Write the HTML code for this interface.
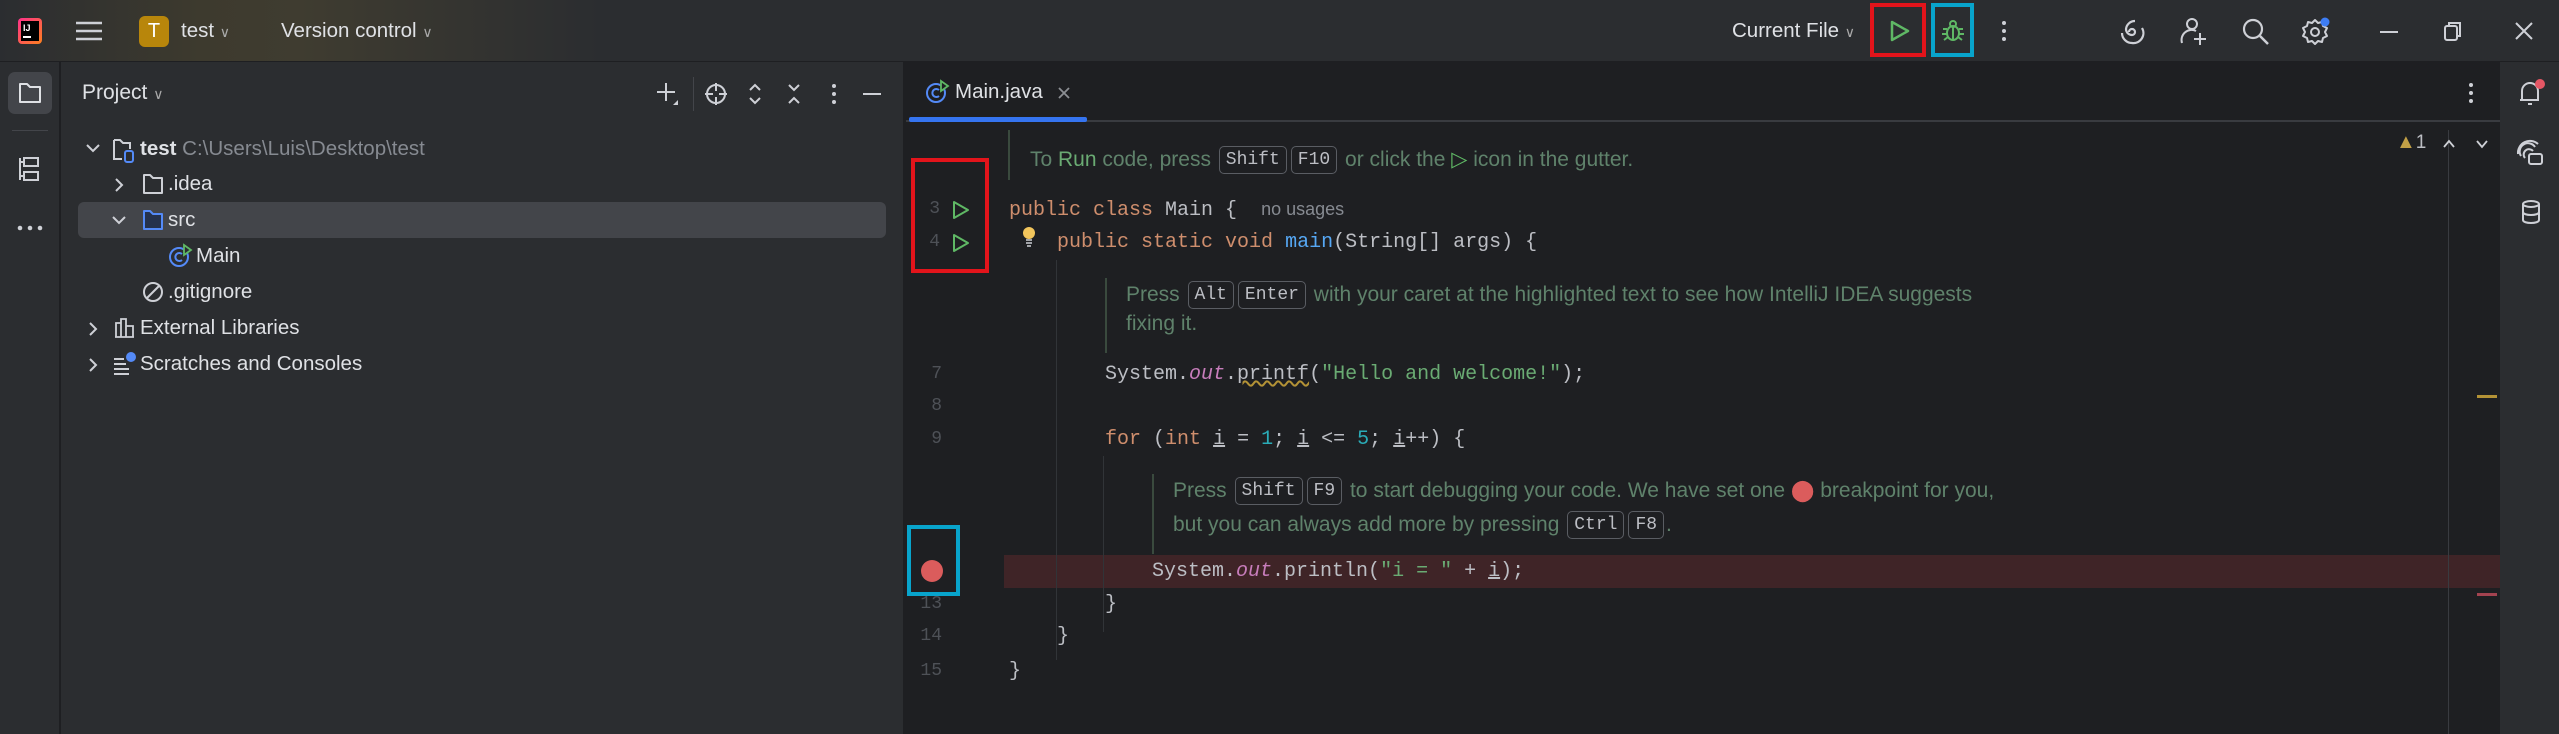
<!DOCTYPE html>
<html><head><meta charset="utf-8"><style>
*{margin:0;padding:0;box-sizing:border-box}
body{width:2559px;height:734px;overflow:hidden;background:#1e1f22;font-family:"Liberation Sans",sans-serif;color:#dfe1e5;position:relative}
.a{position:absolute}
.ui{font-size:20.5px;color:#dfe1e5;white-space:nowrap;line-height:36px;height:36px}
.code{position:absolute;font-family:"Liberation Mono",monospace;font-size:20px;line-height:33px;height:33px;color:#bcbec4;white-space:pre}
.k{color:#cf8e6d}.m{color:#56a8f5}.s{color:#6aab73}.n{color:#2aacb8}.o{color:#c77dbb;font-style:italic}
.ln{position:absolute;font-family:"Liberation Mono",monospace;font-size:18px;color:#4e5157;line-height:33px;height:33px;width:40px;text-align:right;left:902px}
.hint{position:absolute;font-size:21px;color:#5f826b;white-space:nowrap;line-height:33px}
.key{display:inline-block;font-family:"Liberation Mono",monospace;font-size:18px;color:#bcbec4;border:1.5px solid #5a5d63;border-radius:5px;padding:0 6px;line-height:26px;margin:0 2px;vertical-align:middle}
.vl{position:absolute;width:2px;background:#3a4a3e}
.ig{position:absolute;width:1px;background:#313438}
svg{position:absolute;overflow:visible}
</style></head><body>
<div class="a" style="left:0;top:0;width:2559px;height:62px;background:linear-gradient(90deg,#2b2d30 0,#3d3a2e 200px,#3f3c30 300px,#2b2d30 600px,#2b2d30);border-bottom:1px solid #1e1f22"></div>
<div class="a" style="left:18px;top:18px;width:24px;height:26px;background:linear-gradient(135deg,#ff318c,#fc801d);border-radius:4px"></div>
<div class="a" style="left:21px;top:21px;width:18px;height:20px;background:#000"></div>
<div class="a" style="left:23px;top:36px;width:8px;height:2px;background:#fff"></div>
<div class="a" style="left:23px;top:23px;font-size:9px;color:#fff;font-weight:bold">IJ</div>
<svg style="left:76px;top:21px" width="26" height="20"><path d="M0 2H26M0 10H26M0 18H26" stroke="#ced0d6" stroke-width="2.5"/></svg>
<div class="a" style="left:139px;top:16px;width:30px;height:31px;background:#b8860b;border-radius:6px;color:#fff;font-size:20px;text-align:center;line-height:31px">T</div>
<div class="a ui" style="left:181px;top:13px">test <span style="font-size:14px;color:#aaa">&#8744;</span></div>
<div class="a ui" style="left:281px;top:13px">Version control <span style="font-size:14px;color:#aaa">&#8744;</span></div>
<div class="a ui" style="left:1732px;top:13px">Current File <span style="font-size:14px;color:#aaa">&#8744;</span></div>
<div class="a" style="left:1870px;top:3px;width:56px;height:54px;border:4px solid #e3141b"></div>
<svg style="left:1890px;top:20px" width="20" height="22"><path d="M2 2L18 11L2 20Z" fill="none" stroke="#5fb865" stroke-width="2.5" stroke-linejoin="round"/></svg>
<div class="a" style="left:1931px;top:3px;width:43px;height:54px;border:4px solid #08a4cc"></div>
<svg style="left:1941px;top:19px" width="24" height="24"><ellipse cx="12" cy="14" rx="6" ry="7" fill="none" stroke="#5fb865" stroke-width="2"/><circle cx="12" cy="5" r="3" fill="none" stroke="#5fb865" stroke-width="2"/><path d="M2 10H6M18 10H22M1 15H6M18 15H23M3 21L7 18M21 21L17 18M12 8V21" stroke="#5fb865" stroke-width="2"/></svg>
<svg style="left:2001px;top:20px" width="6" height="22"><circle cx="3" cy="3" r="2" fill="#ced0d6"/><circle cx="3" cy="11" r="2" fill="#ced0d6"/><circle cx="3" cy="19" r="2" fill="#ced0d6"/></svg>
<svg style="left:2119px;top:19px" width="26" height="26"><path d="M13 13m-3 0a3 3 0 1 1 3 3a6 6 0 0 1-6-6a9 9 0 0 1 9-8M23 9a10 10 0 0 1-10 15a10 10 0 0 1-10-10" fill="none" stroke="#ced0d6" stroke-width="2.2"/></svg>
<svg style="left:2180px;top:17px" width="28" height="28"><circle cx="12" cy="7" r="5" fill="none" stroke="#ced0d6" stroke-width="2"/><path d="M2 26a10 10 0 0 1 14-12M20 16V28M14 22H26" fill="none" stroke="#ced0d6" stroke-width="2"/></svg>
<svg style="left:2242px;top:18px" width="28" height="28"><circle cx="11" cy="11" r="9" fill="none" stroke="#ced0d6" stroke-width="2.2"/><path d="M18 18L26 26" stroke="#ced0d6" stroke-width="2.5"/></svg>
<svg style="left:2302px;top:18px" width="28" height="28"><circle cx="13" cy="14" r="4" fill="none" stroke="#ced0d6" stroke-width="2"/><path d="M13 2L16 5L20 4L21 8L25 10L23 14L25 18L21 20L20 24L16 23L13 26L10 23L6 24L5 20L1 18L3 14L1 10L5 8L6 4L10 5Z" fill="none" stroke="#ced0d6" stroke-width="2" stroke-linejoin="round"/><circle cx="23" cy="4" r="4.5" fill="#3d7df5"/></svg>
<div class="a" style="left:2380px;top:31px;width:18px;height:2px;background:#ced0d6"></div>
<svg style="left:2444px;top:21px" width="18" height="20"><rect x="1" y="5" width="12" height="14" rx="2" fill="none" stroke="#ced0d6" stroke-width="2"/><path d="M5 5V2H16V15H13" fill="none" stroke="#ced0d6" stroke-width="2"/></svg>
<svg style="left:2514px;top:21px" width="20" height="20"><path d="M2 2L18 18M18 2L2 18" stroke="#ced0d6" stroke-width="2"/></svg>
<div class="a" style="left:0;top:62px;width:60px;height:672px;background:#2b2d30;border-right:1px solid #1e1f22"></div>
<div class="a" style="left:8px;top:72px;width:44px;height:42px;background:#43454a;border-radius:7px"></div>
<svg style="left:18px;top:81px" width="24" height="24"><path d="M2 3H9L12 6H22V21H2Z" fill="none" stroke="#dfe1e5" stroke-width="2" stroke-linejoin="round"/></svg>
<div class="a" style="left:12px;top:130px;width:36px;height:1px;background:#43454a"></div>
<svg style="left:18px;top:156px" width="24" height="26"><path d="M2 2V24M2 6H6M2 20H6M6 2H20V10H6ZM6 16H20V24H6Z" fill="none" stroke="#ced0d6" stroke-width="2"/></svg>
<svg style="left:17px;top:225px" width="26" height="6"><circle cx="3" cy="3" r="2.3" fill="#ced0d6"/><circle cx="13" cy="3" r="2.3" fill="#ced0d6"/><circle cx="23" cy="3" r="2.3" fill="#ced0d6"/></svg>
<div class="a" style="left:61px;top:62px;width:844px;height:672px;background:#2b2d30;border-right:2px solid #1e1f22"></div>
<div class="a ui" style="left:82px;top:75px;font-size:21px">Project <span style="font-size:14px;color:#aaa">&#8744;</span></div>
<svg style="left:656px;top:82px" width="24" height="24"><path d="M10 1V19M1 10H19" stroke="#ced0d6" stroke-width="2"/><path d="M22 18V23H17Z" fill="#ced0d6"/></svg>
<div class="a" style="left:693px;top:77px;width:1px;height:34px;background:#43454a"></div>
<svg style="left:705px;top:83px" width="22" height="22"><circle cx="11" cy="11" r="9" fill="none" stroke="#ced0d6" stroke-width="2"/><path d="M11 0V8M11 14V22M0 11H8M14 11H22" stroke="#ced0d6" stroke-width="2"/></svg>
<svg style="left:748px;top:83px" width="14" height="22"><path d="M2 7L7 2L12 7M2 15L7 20L12 15" fill="none" stroke="#ced0d6" stroke-width="2"/></svg>
<svg style="left:787px;top:83px" width="14" height="22"><path d="M2 2L7 7L12 2M2 20L7 15L12 20" fill="none" stroke="#ced0d6" stroke-width="2"/></svg>
<svg style="left:831px;top:83px" width="6" height="22"><circle cx="3" cy="3" r="2" fill="#ced0d6"/><circle cx="3" cy="11" r="2" fill="#ced0d6"/><circle cx="3" cy="19" r="2" fill="#ced0d6"/></svg>
<div class="a" style="left:863px;top:93px;width:18px;height:2px;background:#ced0d6"></div>
<div class="a" style="left:78px;top:202px;width:808px;height:36px;background:#43454a;border-radius:6px"></div>
<svg style="left:86px;top:143px" width="14" height="10"><path d="M1 2L7 8L13 2" fill="none" stroke="#ced0d6" stroke-width="2"/></svg>
<svg style="left:112px;top:138px" width="26" height="26"><path d="M2 2H8L11 5H18V11M2 2V21H10" fill="none" stroke="#ced0d6" stroke-width="2"/><rect x="13" y="13" width="8" height="11" rx="2" fill="none" stroke="#548af7" stroke-width="2"/></svg>
<div class="a ui" style="left:140px;top:131px"><b>test</b> <span style="color:#868a91">C:\Users\Luis\Desktop\test</span></div>
<svg style="left:114px;top:178px" width="10" height="14"><path d="M2 1L8 7L2 13" fill="none" stroke="#ced0d6" stroke-width="2"/></svg>
<svg style="left:142px;top:173px" width="22" height="22"><path d="M2 2H8L11 5H20V20H2Z" fill="none" stroke="#ced0d6" stroke-width="2" stroke-linejoin="round"/></svg>
<div class="a ui" style="left:168px;top:166px">.idea</div>
<svg style="left:112px;top:215px" width="14" height="10"><path d="M1 2L7 8L13 2" fill="none" stroke="#ced0d6" stroke-width="2"/></svg>
<svg style="left:142px;top:209px" width="22" height="22"><path d="M2 2H8L11 5H20V20H2Z" fill="#25324d" stroke="#548af7" stroke-width="2" stroke-linejoin="round"/></svg>
<div class="a ui" style="left:168px;top:202px">src</div>
<svg style="left:168px;top:244px" width="24" height="24"><circle cx="11" cy="13" r="9" fill="none" stroke="#548af7" stroke-width="2"/><path d="M14 10a4 4 0 1 0 0 6" fill="none" stroke="#548af7" stroke-width="2"/><path d="M16 1L23 6L16 11Z" fill="#2b2d30" stroke="#5fb865" stroke-width="1.8"/></svg>
<div class="a ui" style="left:196px;top:238px">Main</div>
<svg style="left:142px;top:281px" width="22" height="22"><circle cx="11" cy="11" r="9" fill="none" stroke="#ced0d6" stroke-width="2"/><path d="M5 17L17 5" stroke="#ced0d6" stroke-width="2"/></svg>
<div class="a ui" style="left:168px;top:274px">.gitignore</div>
<svg style="left:88px;top:322px" width="10" height="14"><path d="M2 1L8 7L2 13" fill="none" stroke="#ced0d6" stroke-width="2"/></svg>
<svg style="left:114px;top:317px" width="22" height="22"><path d="M2 20V6H7V20M7 20V2H12V20M12 20V9H19V20ZM1 20H20" fill="none" stroke="#ced0d6" stroke-width="1.8"/></svg>
<div class="a ui" style="left:140px;top:310px">External Libraries</div>
<svg style="left:88px;top:358px" width="10" height="14"><path d="M2 1L8 7L2 13" fill="none" stroke="#ced0d6" stroke-width="2"/></svg>
<svg style="left:113px;top:351px" width="24" height="24"><path d="M1 8H11M1 13H13M1 18H16M1 23H16" stroke="#ced0d6" stroke-width="2"/><circle cx="18" cy="6" r="5" fill="#548af7"/></svg>
<div class="a ui" style="left:140px;top:346px">Scratches and Consoles</div>
<div class="a" style="left:906px;top:62px;width:1594px;height:60px;background:#1e1f22;border-bottom:2px solid #393b40"></div>
<svg style="left:925px;top:80px" width="24" height="24"><circle cx="11" cy="13" r="9" fill="none" stroke="#548af7" stroke-width="2"/><path d="M14 10a4 4 0 1 0 0 6" fill="none" stroke="#548af7" stroke-width="2"/><path d="M16 1L23 6L16 11Z" fill="#1e1f22" stroke="#5fb865" stroke-width="1.8"/></svg>
<div class="a ui" style="left:955px;top:74px">Main.java</div>
<svg style="left:1058px;top:87px" width="12" height="12"><path d="M1 1L11 11M11 1L1 11" stroke="#8c8f94" stroke-width="1.8"/></svg>
<div class="a" style="left:909px;top:117px;width:178px;height:5px;background:#3574f0;border-radius:2px"></div>
<svg style="left:2468px;top:82px" width="6" height="22"><circle cx="3" cy="3" r="2" fill="#ced0d6"/><circle cx="3" cy="11" r="2" fill="#ced0d6"/><circle cx="3" cy="19" r="2" fill="#ced0d6"/></svg>
<div class="a" style="left:2500px;top:62px;width:59px;height:672px;background:#2b2d30"></div>
<svg style="left:2517px;top:78px" width="30" height="30"><path d="M5 22V13a8 8 0 0 1 16 0V22H3M11 26H15" fill="none" stroke="#ced0d6" stroke-width="2"/><circle cx="23" cy="6" r="5" fill="#e55765"/></svg>
<svg style="left:2517px;top:140px" width="28" height="28"><path d="M4 16a8 8 0 0 1 14-9M8 18a5 5 0 0 1 8-7M1 14a12 12 0 0 1 20-10" fill="none" stroke="#ced0d6" stroke-width="2"/><rect x="12" y="14" width="13" height="10" rx="2" fill="none" stroke="#ced0d6" stroke-width="2"/></svg>
<svg style="left:2521px;top:200px" width="20" height="24"><ellipse cx="10" cy="4" rx="8" ry="3" fill="none" stroke="#ced0d6" stroke-width="2"/><path d="M2 4V20c0 4 16 4 16 0V4M2 12c0 4 16 4 16 0" fill="none" stroke="#ced0d6" stroke-width="2"/></svg>
<div class="a" style="left:1004px;top:555px;width:1496px;height:33px;background:#3f2427"></div>
<div class="a" style="left:2448px;top:130px;width:1px;height:604px;background:#393b40"></div>
<div class="a" style="left:2477px;top:395px;width:20px;height:3px;background:#b39236"></div>
<div class="a" style="left:2477px;top:593px;width:20px;height:3px;background:#a34350"></div>
<div class="a" style="left:2396px;top:131px;font-size:20px;color:#c2a046">&#9650;<span style="color:#bcbec4;font-size:19px">1</span></div>
<svg style="left:2443px;top:139px" width="60" height="10"><path d="M1 8L6 2L11 8M34 2L39 8L44 2" fill="none" stroke="#ced0d6" stroke-width="1.8"/></svg>
<div class="ig" style="left:1056px;top:260px;height:400px"></div>
<div class="ig" style="left:1103px;top:456px;height:176px"></div>
<div class="vl" style="left:1008px;top:130px;height:50px"></div>
<div class="hint" style="left:1030px;top:143px">To <span style="color:#6aab73">Run</span> code, press <span class="key">Shift</span><span class="key">F10</span> or click the <span style="color:#5fb865">&#9655;</span> icon in the gutter.</div>
<div class="vl" style="left:1105px;top:278px;height:75px"></div>
<div class="hint" style="left:1126px;top:278px">Press <span class="key">Alt</span><span class="key">Enter</span> with your caret at the highlighted text to see how IntelliJ IDEA suggests</div>
<div class="hint" style="left:1126px;top:307px">fixing it.</div>
<div class="vl" style="left:1152px;top:474px;height:80px"></div>
<div class="hint" style="left:1173px;top:474px">Press <span class="key">Shift</span><span class="key">F9</span> to start debugging your code. We have set one <span style="color:#db5c5c">&#11044;</span> breakpoint for you,</div>
<div class="hint" style="left:1173px;top:508px">but you can always add more by pressing <span class="key">Ctrl</span><span class="key">F8</span>.</div>
<div class="ln" style="top:193px;width:38px">3</div>
<div class="ln" style="top:226px;width:38px">4</div>
<div class="ln" style="top:358px">7</div>
<div class="ln" style="top:390px">8</div>
<div class="ln" style="top:423px">9</div>
<div class="ln" style="top:588px">13</div>
<div class="ln" style="top:620px">14</div>
<div class="ln" style="top:655px">15</div>
<svg style="left:952px;top:200px" width="18" height="20"><path d="M2 2L16 10L2 18Z" fill="none" stroke="#5fb865" stroke-width="2" stroke-linejoin="round"/></svg>
<svg style="left:952px;top:233px" width="18" height="20"><path d="M2 2L16 10L2 18Z" fill="none" stroke="#5fb865" stroke-width="2" stroke-linejoin="round"/></svg>
<div class="a" style="left:911px;top:158px;width:78px;height:115px;border:4px solid #e3141b"></div>
<div class="a" style="left:907px;top:525px;width:53px;height:71px;border:4px solid #08a4cc"></div>
<div class="a" style="left:921px;top:560px;width:22px;height:22px;border-radius:50%;background:#db5c5c"></div>
<div class="code" style="left:1009px;top:193px"><span class="k">public class</span> Main {  <span style="font-family:'Liberation Sans';font-size:18px;color:#868a91">no usages</span></div>
<svg style="left:1022px;top:226px" width="14" height="22"><circle cx="7" cy="7" r="6" fill="#f2c55c"/><path d="M4 14H10M4 17H10M5 20H9" stroke="#ced0d6" stroke-width="1.5"/></svg>
<div class="code" style="left:1057px;top:226px"><span class="k">public static void</span> <span class="m">main</span>(String[] args) {</div>
<div class="code" style="left:1105px;top:358px">System.<span class="o">out</span>.<span style="text-decoration:underline wavy #b39236">printf</span>(<span class="s">"Hello and welcome!"</span>);</div>
<div class="code" style="left:1105px;top:423px"><span class="k">for</span> (<span class="k">int</span> <u>i</u> = <span class="n">1</span>; <u>i</u> &lt;= <span class="n">5</span>; <u>i</u>++) {</div>
<div class="code" style="left:1152px;top:555px">System.<span class="o">out</span>.println(<span class="s">"i = "</span> + <u>i</u>);</div>
<div class="code" style="left:1105px;top:588px">}</div>
<div class="code" style="left:1057px;top:620px">}</div>
<div class="code" style="left:1009px;top:655px">}</div>
</body></html>
